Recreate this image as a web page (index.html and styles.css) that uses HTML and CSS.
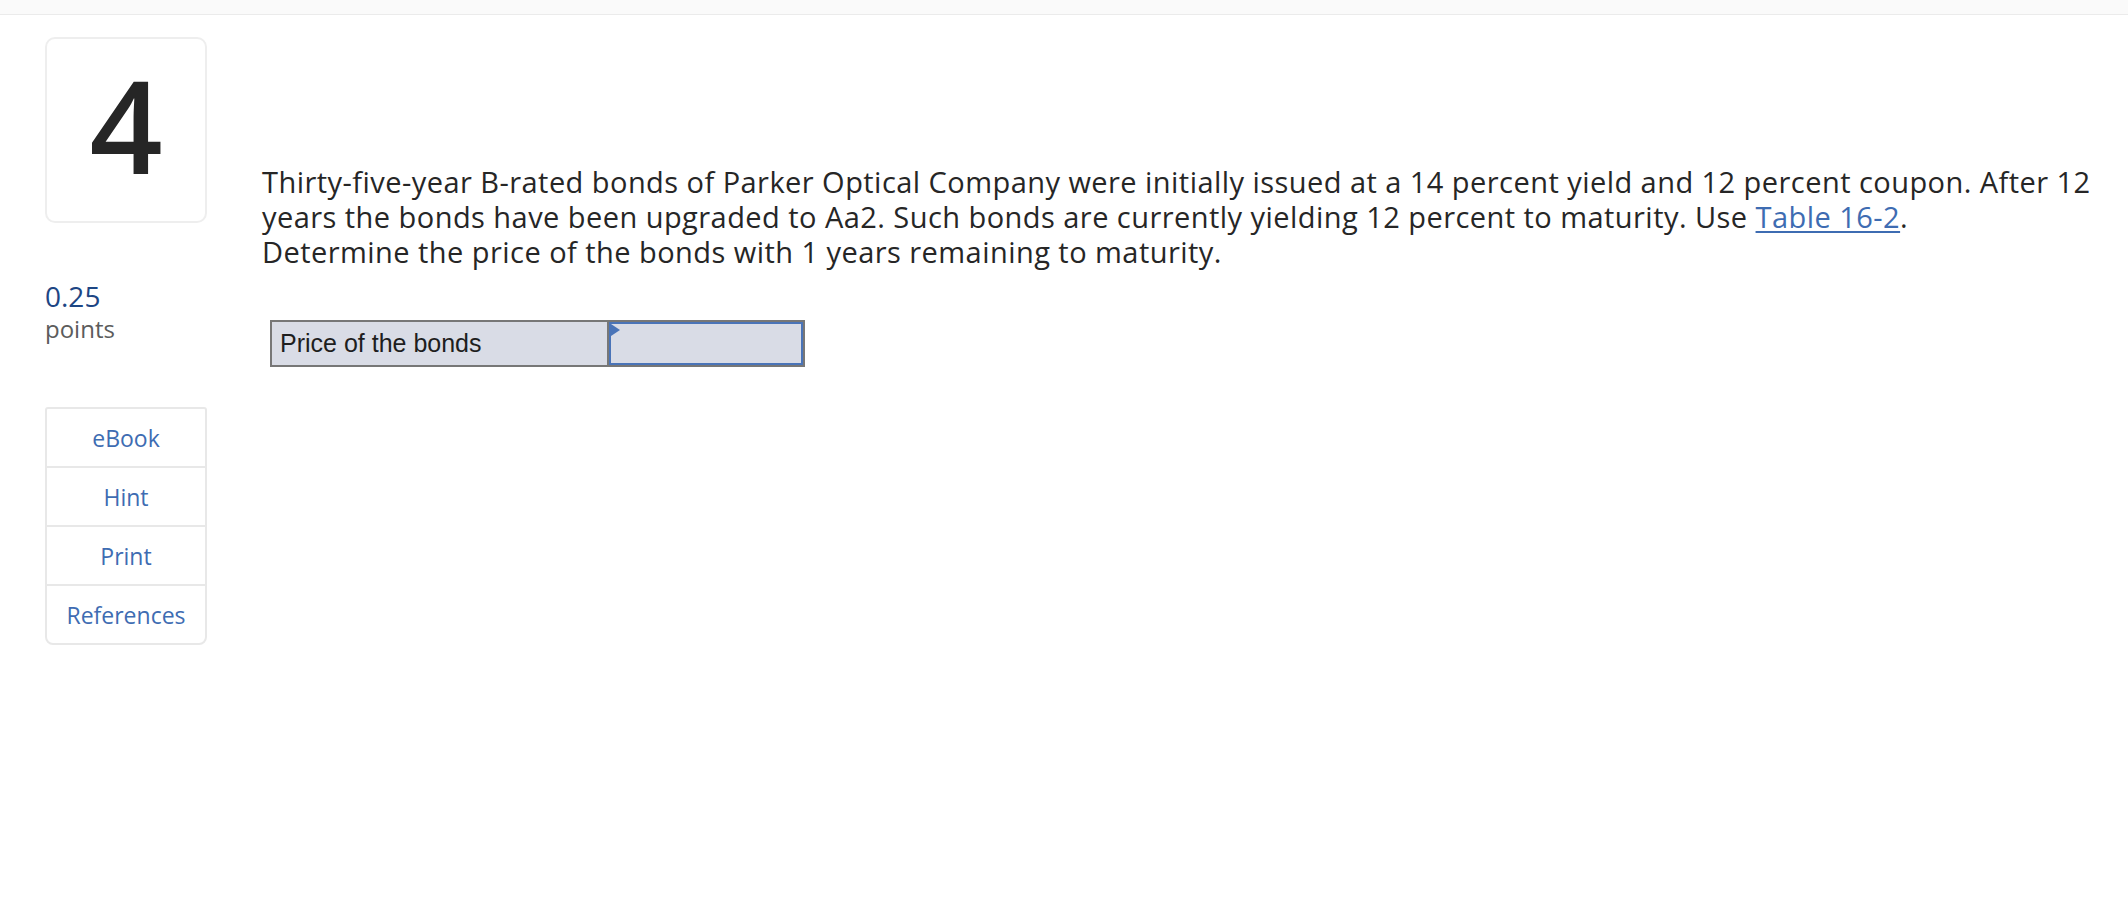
FILE: index.html
```html
<!DOCTYPE html>
<html lang="en">
<head>
<meta charset="utf-8">
<title>Question 4</title>
<link rel="stylesheet" href="styles.css">
</head>
<body>
<div class="topbar"></div>
<div class="page">
  <aside class="side">
    <div class="qnum">4</div>
    <div class="points">
      <div class="pts-val">0.25</div>
      <div class="pts-label">points</div>
    </div>
    <ul class="tools">
      <li><a href="#">eBook</a></li>
      <li><a href="#">Hint</a></li>
      <li><a href="#">Print</a></li>
      <li><a href="#">References</a></li>
    </ul>
  </aside>
  <main class="main">
    <p class="question">Thirty-five-year B-rated bonds of Parker Optical Company were initially issued at a 14 percent yield and 12 percent coupon. After 12 years the bonds have been upgraded to Aa2. Such bonds are currently yielding 12 percent to maturity. Use <a href="#" class="link">Table 16-2</a>.<br>Determine the price of the bonds with 1 years remaining to maturity.</p>
    <div class="answer">
      <div class="label-cell">Price of the bonds</div>
      <div class="input-cell"><span class="flag"></span></div>
    </div>
  </main>
</div>
</body>
</html>
```
FILE: styles.css
```css
html, body {
  margin: 0;
  padding: 0;
  background: #fff;
}
body {
  font-family: "Open Sans", "Noto Sans", sans-serif;
  color: #262626;
}
.topbar {
  height: 14px;
  background: #fafafa;
  border-bottom: 1px solid #ebebeb;
}
.page {
  display: flex;
  padding-left: 45px;
}
.side {
  width: 162px;
  flex: none;
  display: flex;
  flex-direction: column;
}
.qnum {
  margin-top: 22px;
  height: 172px;
  padding-bottom: 10px;
  border: 2px solid #eeeeee;
  border-radius: 10px;
  display: flex;
  align-items: center;
  justify-content: center;
  font-size: 128px;
  font-weight: 600;
  line-height: 1;
  color: #262626;
  box-sizing: content-box;
  width: 158px;
}
.points {
  margin-top: 55px;
}
.pts-val {
  font-size: 28px;
  line-height: 36px;
  color: #1d4684;
}
.pts-label {
  font-size: 24px;
  line-height: 30px;
  color: #5c5c5c;
}
.tools {
  list-style: none;
  margin: 63px 0 0 0;
  padding: 0;
  border: 2px solid #e8e8e8;
  border-radius: 3px 3px 8px 8px;
}
.tools li {
  height: 57px;
  display: flex;
  align-items: center;
  justify-content: center;
  border-top: 2px solid #e8e8e8;
}
.tools li:first-child {
  border-top: none;
}
.tools a {
  color: #3e6cb2;
  text-decoration: none;
  font-size: 23px;
}
.main {
  margin-left: 55px;
  flex: 1;
  padding-right: 10px;
}
.question {
  margin: 149px 0 0 0;
  font-size: 29px;
  letter-spacing: 0.45px;
  line-height: 35px;
  color: #262626;
}
.link {
  color: #3e6cb2;
  text-decoration: underline;
  text-underline-offset: 3px;
  white-space: nowrap;
}
.answer {
  display: flex;
  margin-top: 51px;
  margin-left: 8px;
  width: 535px;
  height: 47px;
  box-sizing: border-box;
  border: 2px solid #777777;
  background: #d9dce6;
}
.label-cell {
  width: 337px;
  box-sizing: border-box;
  border-right: 2px solid #777777;
  font-family: "Liberation Sans", Arial, sans-serif;
  font-size: 25px;
  line-height: 43px;
  padding-left: 8px;
  color: #1e1e1e;
}
.input-cell {
  flex: 1;
  position: relative;
  border: 2px solid #4a74b8;
}
.flag {
  position: absolute;
  left: 0;
  top: 0;
  width: 0;
  height: 0;
  border-top: 6px solid transparent;
  border-bottom: 6px solid transparent;
  border-left: 9px solid #4a74b8;
}
```
